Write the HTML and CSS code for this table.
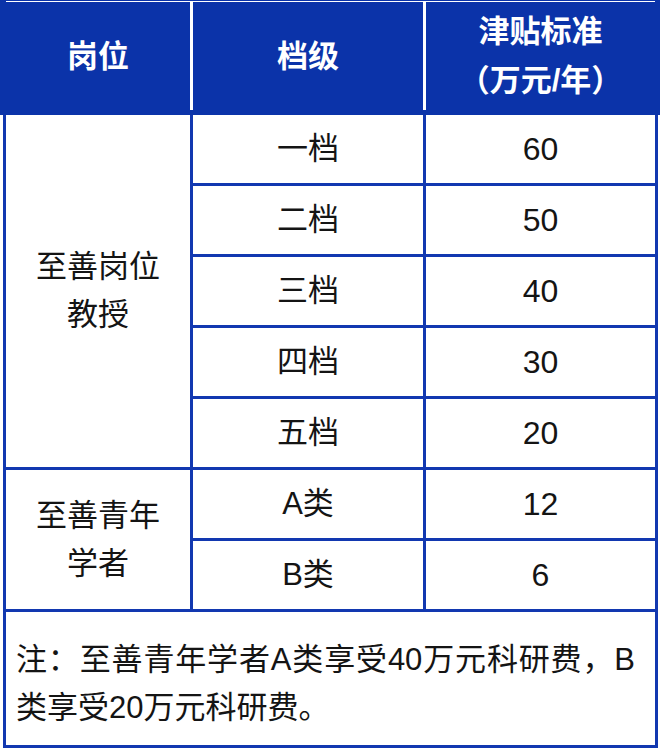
FILE: index.html
```html
<!DOCTYPE html>
<html lang="zh-CN">
<head>
<meta charset="utf-8">
<title>津贴标准</title>
<link rel="stylesheet" href="styles.css">
</head>
<body>
<div class="sheet">
  <div class="head">
    <div class="head-grid">
      <div class="hcell">岗位</div>
      <div class="hcell">档级</div>
      <div class="hcell">津贴标准<br>（万元/年）</div>
    </div>
  </div>
  <div class="body">
    <div class="grid">
      <div class="cell span5">至善岗位<br>教授</div>
      <div class="cell">一档</div><div class="cell num">60</div>
      <div class="cell">二档</div><div class="cell num">50</div>
      <div class="cell">三档</div><div class="cell num">40</div>
      <div class="cell">四档</div><div class="cell num">30</div>
      <div class="cell">五档</div><div class="cell num">20</div>
      <div class="cell span2">至善青年<br>学者</div>
      <div class="cell">A类</div><div class="cell num">12</div>
      <div class="cell">B类</div><div class="cell num">6</div>
    </div>
    <div class="note">注：至善青年学者A类享受40万元科研费，B类享受20万元科研费。</div>
  </div>
</div>
</body>
</html>
```
FILE: styles.css
```css
html, body {
  margin: 0;
  padding: 0;
  background: #ffffff;
}
body {
  font-family: "Liberation Sans", "Noto Sans CJK SC", sans-serif;
  color: #141414;
}
.sheet {
  width: 660px;
}
.head {
  background: #0b33a9;
  padding: 1px 5px 5px 6px;
}
.head-grid {
  display: grid;
  grid-template-columns: 184px 230px 229px;
  column-gap: 3px;
  background: #ffffff;
  padding-top: 1px;
}
.hcell {
  background: #0b33a9;
  color: #ffffff;
  font-weight: bold;
  font-size: 31px;
  line-height: 49px;
  height: 108px;
  display: flex;
  align-items: center;
  justify-content: center;
  text-align: center;
}
.body {
  margin: 0 2px 0 3px;
  border: 3px solid #1238b0;
  border-top: 0;
}
.grid {
  display: grid;
  grid-template-columns: 184px 230px 229px;
  grid-template-rows: repeat(7, 68px);
  gap: 3px;
  background: #1238b0;
  border-bottom: 3px solid #1238b0;
}
.cell {
  background: #ffffff;
  font-size: 31px;
  line-height: 48px;
  display: flex;
  align-items: center;
  justify-content: center;
  text-align: center;
}
.num {
  font-size: 32px;
}
.span5 {
  grid-row: span 5;
}
.span2 {
  grid-row: span 2;
}
.note {
  height: 133px;
  box-sizing: border-box;
  padding: 24px 20px 0 10px;
  font-size: 31px;
  line-height: 48px;
  text-align: justify;
}
```
